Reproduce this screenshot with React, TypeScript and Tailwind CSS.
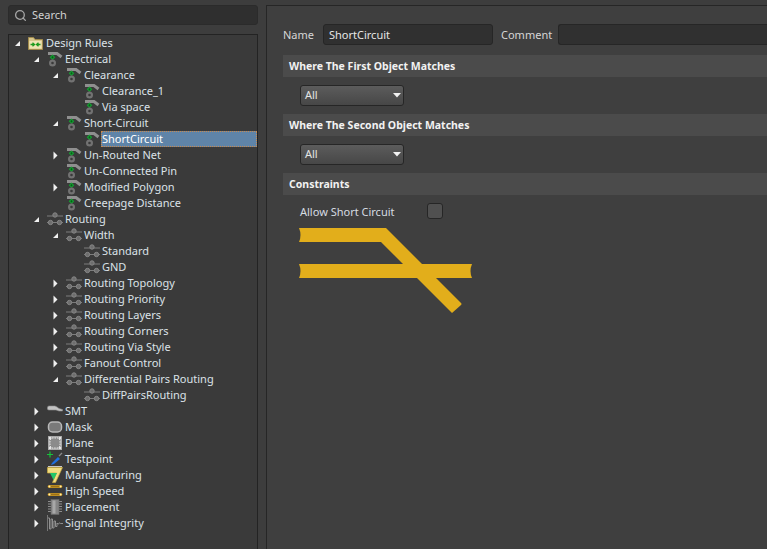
import React from "react";
import { Search } from "lucide-react";

type IconName =
  | "folder"
  | "electrical"
  | "routing"
  | "smt"
  | "mask"
  | "plane"
  | "testpoint"
  | "manufacturing"
  | "highspeed"
  | "placement"
  | "signal";

type Row = {
  label: string;
  level: number;
  icon: IconName;
  arrow?: "open" | "closed";
  selected?: boolean;
};

const rows: Row[] = [
  { label: "Design Rules", level: 0, icon: "folder", arrow: "open" },
  { label: "Electrical", level: 1, icon: "electrical", arrow: "open" },
  { label: "Clearance", level: 2, icon: "electrical", arrow: "open" },
  { label: "Clearance_1", level: 3, icon: "electrical" },
  { label: "Via space", level: 3, icon: "electrical" },
  { label: "Short-Circuit", level: 2, icon: "electrical", arrow: "open" },
  { label: "ShortCircuit", level: 3, icon: "electrical", selected: true },
  { label: "Un-Routed Net", level: 2, icon: "electrical", arrow: "closed" },
  { label: "Un-Connected Pin", level: 2, icon: "electrical" },
  { label: "Modified Polygon", level: 2, icon: "electrical", arrow: "closed" },
  { label: "Creepage Distance", level: 2, icon: "electrical" },
  { label: "Routing", level: 1, icon: "routing", arrow: "open" },
  { label: "Width", level: 2, icon: "routing", arrow: "open" },
  { label: "Standard", level: 3, icon: "routing" },
  { label: "GND", level: 3, icon: "routing" },
  { label: "Routing Topology", level: 2, icon: "routing", arrow: "closed" },
  { label: "Routing Priority", level: 2, icon: "routing", arrow: "closed" },
  { label: "Routing Layers", level: 2, icon: "routing", arrow: "closed" },
  { label: "Routing Corners", level: 2, icon: "routing", arrow: "closed" },
  { label: "Routing Via Style", level: 2, icon: "routing", arrow: "closed" },
  { label: "Fanout Control", level: 2, icon: "routing", arrow: "closed" },
  { label: "Differential Pairs Routing", level: 2, icon: "routing", arrow: "open" },
  { label: "DiffPairsRouting", level: 3, icon: "routing" },
  { label: "SMT", level: 1, icon: "smt", arrow: "closed" },
  { label: "Mask", level: 1, icon: "mask", arrow: "closed" },
  { label: "Plane", level: 1, icon: "plane", arrow: "closed" },
  { label: "Testpoint", level: 1, icon: "testpoint", arrow: "closed" },
  { label: "Manufacturing", level: 1, icon: "manufacturing", arrow: "closed" },
  { label: "High Speed", level: 1, icon: "highspeed", arrow: "closed" },
  { label: "Placement", level: 1, icon: "placement", arrow: "closed" },
  { label: "Signal Integrity", level: 1, icon: "signal", arrow: "closed" },
];

function TreeIcon({ name }: { name: IconName }) {
  return (
    <svg width="16" height="16" viewBox="0 0 16 16" className="shrink-0">
      {name === "folder" && (
        <>
          <path d="M0.5 2.5h5l1.5 2h7.5v10h-14z" fill="#d9c78c" stroke="#a08a4c" />
          <rect x="1.5" y="6" width="12" height="7.5" fill="#efe3b4" />
          <path d="M2.5 9.5h3.5M4.5 7.8l2 1.7-2 1.7M12.5 9.5H9M10.5 7.8l-2 1.7 2 1.7" fill="none" stroke="#1f9a1f" strokeWidth="1.3" />
        </>
      )}
      {name === "electrical" && (
        <>
          <path d="M1 2.5h9l4.5 3.5" fill="none" stroke="#8f8f8f" strokeWidth="3" />
          <path d="M5.5 3.5l2.8 2.8-2.8 2.8-2.8-2.8z" fill="#12a02f" />
          <path d="M4.4 6.3h2.2M5.5 5.2v2.2" stroke="#0a4f18" strokeWidth="0.7" />
          <circle cx="5.5" cy="12" r="3.5" fill="#727272" />
          <circle cx="5.5" cy="12" r="1.3" fill="#3a3a3a" />
        </>
      )}
      {name === "routing" && (
        <>
          <path d="M0 5h16M0 11.5h16" stroke="#7d7d7d" strokeWidth="1.1" />
          <circle cx="8" cy="4" r="2.2" fill="#6e6e6e" stroke="#868686" />
          <circle cx="3.5" cy="11.5" r="2.2" fill="#6e6e6e" stroke="#868686" />
          <circle cx="12.5" cy="11.5" r="2.2" fill="#6e6e6e" stroke="#868686" />
        </>
      )}
      {name === "smt" && (
        <path d="M0.5 4.5q0-1.5 1.5-1.5h6l2 1 2 1.5 3.5 1v1.5h-3.5l-3-1H2q-1.5 0-1.5-1z" fill="#c2c2c2" stroke="#8d8d8d" strokeWidth="0.6" />
      )}
      {name === "mask" && (
        <rect x="1.5" y="3" width="13" height="10" rx="4" fill="#7a7a7a" stroke="#b8b8b8" strokeWidth="1.5" />
      )}
      {name === "plane" && (
        <>
          <rect x="1" y="1" width="14" height="14" fill="#a8a8a8" />
          <path d="M5 3h6l2 2v6l-2 2H5l-2-2V5z" fill="#8b8b8b" stroke="#e6e6e6" strokeDasharray="1.5 1" />
          <circle cx="3" cy="3" r="1.2" fill="#e6e6e6" />
          <circle cx="13" cy="3" r="1.2" fill="#e6e6e6" />
          <circle cx="3" cy="13" r="1.2" fill="#e6e6e6" />
          <circle cx="13" cy="13" r="1.2" fill="#e6e6e6" />
        </>
      )}
      {name === "testpoint" && (
        <>
          <path d="M0 3.5h6M3 0.5v6" stroke="#17c23a" strokeWidth="1.2" />
          <path d="M5 12l6-6 2 2-6 5-3 1z" fill="#1f6fe0" />
          <path d="M12 5l3-3" stroke="#8a8a8a" strokeWidth="1.3" />
          <path d="M1 15.5h14" stroke="#c8c8c8" />
        </>
      )}
      {name === "manufacturing" && (
        <>
          <path d="M0.5 0.5h15l-7 15h-3l4-9.5H0.5z" fill="#f0dc82" stroke="#c9a93e" strokeWidth="0.7" />
          <path d="M3 6h7l-3.5 7z" fill="#22c76a" />
        </>
      )}
      {name === "highspeed" && (
        <>
          <path d="M2 3.5h12M2 11.5h12" stroke="#e8a818" strokeWidth="2.6" strokeLinecap="round" />
          <path d="M3 3.5h10M3 11.5h10" stroke="#8a6418" strokeWidth="0.8" />
          <circle cx="2.5" cy="3.5" r="1" fill="#fff0b0" />
          <circle cx="13.5" cy="3.5" r="1" fill="#fff0b0" />
          <circle cx="2.5" cy="11.5" r="1" fill="#fff0b0" />
          <circle cx="13.5" cy="11.5" r="1" fill="#fff0b0" />
        </>
      )}
      {name === "placement" && (
        <>
          <path d="M1 2.5h14M1 5h14M1 7.5h14M1 10h14M1 12.5h14" stroke="#8d8d8d" strokeWidth="1.1" />
          <rect x="4" y="0.5" width="8" height="15" fill="#858585" stroke="#6a6a6a" strokeWidth="0.6" />
          <rect x="5.5" y="1.5" width="3" height="13" fill="#a8a8a8" />
        </>
      )}
      {name === "signal" && (
        <>
          <path d="M0.5 0v16" stroke="#777" />
          <path d="M1 3h1.5v11h1.5V4h1.5v9H7V6h1.5v5.5H10V8q1 2 2 0.5t1.5 0H16" fill="none" stroke="#9a9a9a" strokeWidth="0.9" />
        </>
      )}
    </svg>
  );
}

function Arrow({ kind }: { kind?: "open" | "closed" }) {
  return (
    <span className="flex w-[7px] shrink-0 items-center justify-center">
      {kind === "open" && (
        <svg width="7" height="7" viewBox="0 0 7 7">
          <path d="M6 1v5H1z" fill="#f0f0f0" />
        </svg>
      )}
      {kind === "closed" && (
        <svg width="5" height="9" viewBox="0 0 5 9">
          <path d="M0.5 0.5l4 4-4 4z" fill="#f0f0f0" />
        </svg>
      )}
    </span>
  );
}

function TreeRow({ row }: { row: Row }) {
  const indent = ["pl-[5px]", "pl-[24px]", "pl-[43px]", "pl-[62px]"][row.level];
  const isLeaf = row.level === 3;
  return (
    <div className={`flex h-4 items-center ${indent}`}>
      {isLeaf ? <span className="w-[10px] shrink-0" /> : <Arrow kind={row.arrow} />}
      <span className={isLeaf ? "ml-[3px]" : "ml-[7px]"}>
        <TreeIcon name={row.icon} />
      </span>
      {row.selected ? (
        <span className="ml-px flex h-4 flex-1 items-center border border-dotted border-[#c98a4e] bg-[#5f84a8] text-white">
          {row.label}
        </span>
      ) : (
        <span className="ml-[2px]">{row.label}</span>
      )}
    </div>
  );
}

function SectionHeader({ title }: { title: string }) {
  return (
    <div className="flex h-[22px] items-center bg-[#4b4b4b] pl-[6px] text-[10.5px] font-bold text-[#f2f2f2]">
      {title}
    </div>
  );
}

function AllSelect() {
  return (
    <div className="ml-[17px] flex h-[21px] w-[104px] items-center justify-between rounded-[3px] border border-[#262626] bg-gradient-to-b from-[#5c5c5c] to-[#474747] pl-[4px] pr-[2px] text-[#e4e4e4]">
      <span className="pb-px">All</span>
      <svg width="8" height="5" viewBox="0 0 8 5">
        <path d="M0 0h8L4 4.5z" fill="#f2f2f2" />
      </svg>
    </div>
  );
}

export default function App() {
  return (
    <div
      className="flex h-[549px] w-[767px] gap-2 overflow-hidden bg-[#3d3d3d] pl-2 pt-[5px] text-[11px] leading-4 text-[#dce2e8]"
      style={{ fontFamily: '"Noto Sans", "Open Sans", sans-serif' }}
    >
      <div className="flex w-[250px] shrink-0 flex-col gap-[9px]">
        <div className="flex h-5 items-center gap-[5px] rounded-[3px] border border-[#2b2b2b] bg-[#2f2f2f] pl-[5px] text-[#d2d2d2]">
          <Search size={13} strokeWidth={2.4} className="text-[#a6a6a6]" />
          <span>Search</span>
        </div>
        <div className="flex-1 border border-b-0 border-[#232323] bg-[#3a3a3a]">
          {rows.map((row) => (
            <TreeRow key={row.label} row={row} />
          ))}
        </div>
      </div>

      <div className="min-w-0 flex-1 border border-r-0 border-b-0 border-[#262626] bg-[#3f3f3f] pl-4 pt-[18px]">
        <div className="flex h-[21px] items-center text-[#d6d6d6]">
          <span className="w-[40px] shrink-0 pt-px">Name</span>
          <div className="flex h-[21px] w-[170px] shrink-0 items-center rounded-[3px] border border-[#262626] bg-[#303030] pl-[5px] text-[#e6e6e6]">
            ShortCircuit
          </div>
          <span className="ml-2 w-[57px] shrink-0 pt-px">Comment</span>
          <div className="h-[21px] flex-1 rounded-l-[3px] border border-r-0 border-[#262626] bg-[#303030]" />
        </div>
        <div className="mt-[10px] flex flex-col">
          <SectionHeader title="Where The First Object Matches" />
          <div className="mt-2">
            <AllSelect />
          </div>
          <div className="mt-2">
            <SectionHeader title="Where The Second Object Matches" />
          </div>
          <div className="mt-2">
            <AllSelect />
          </div>
          <div className="mt-2">
            <SectionHeader title="Constraints" />
          </div>
          <div className="mt-2 flex h-4 items-center pl-[17px] text-[#d6dce2]">
            <span className="w-[127px] pt-px">Allow Short Circuit</span>
            <span className="h-4 w-4 rounded-[3px] border border-[#262626] bg-[#505050]" />
          </div>
          <svg width="174" height="87" viewBox="0 0 174 87" className="ml-[16px] mt-2">
            <path
              d="M0 1H87L162 76Q163 77 162 78L153 86L82 15H0Q3 8 0 1ZM0 37H173Q170 44 173 51H0Q3 44 0 37Z"
              fill="#e2ae1b"
            />
          </svg>
        </div>
      </div>
    </div>
  );
}
